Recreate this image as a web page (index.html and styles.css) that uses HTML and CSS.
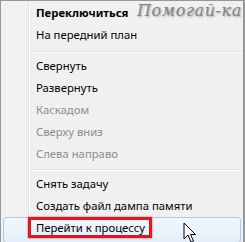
FILE: index.html
```html
<!DOCTYPE html>
<html lang="ru">
<head>
<meta charset="UTF-8" />
<title>Меню</title>
<link rel="stylesheet" href="styles.css">
</head>
<body>

<div class="menu">
  <div class="item bold">Переключиться</div>
  <div class="item">На передний план</div>
  <div class="sep"></div>
  <div class="item">Свернуть</div>
  <div class="item">Развернуть</div>
  <div class="item off">Каскадом</div>
  <div class="item off">Сверху вниз</div>
  <div class="item off">Слева направо</div>
  <div class="sep short"></div>
  <div class="item">Снять задачу</div>
  <div class="item">Создать файл дампа памяти</div>
  <div class="item hover">Перейти к процессу<span class="mark"></span></div>

  <div class="watermark">Помогай-ка</div>
  <svg class="cursor" width="14" height="22" viewBox="0 0 14 22">
    <path d="M1 1 L1 17 L5 13 L8 20 L10.5 19 L7.5 12.5 L12.5 12.5 Z" fill="#fff" stroke="#000" stroke-width="1"/>
  </svg>
</div>

</body>
</html>
```

FILE: styles.css
```css
html, body {
  margin: 0;
  padding: 0;
  background: #f0f0f0;
}
body {
  font-family: "Noto Sans", sans-serif;
  font-size: 11.3px;
  overflow: hidden;
}
.menu {
  position: relative;
  box-sizing: border-box;
  width: 245px;
  height: 260px;
  border: 1px solid #979797;
  border-right: 2px solid #979797;
  border-bottom: none;
  padding: 1px 0 0 2px;
  background: linear-gradient(to right, #f1f1f1 27px, #e2e3e3 27px, #e2e3e3 28px, #fff 28px, #fff 29px, #f0f0f0 29px);
}
.item {
  position: relative;
  height: 22px;
  line-height: 22px;
  padding-left: 33px;
  margin-right: 2px;
  color: #000;
}
.bold {
  font-weight: bold;
}
.off {
  color: #8d8d8d;
}
.sep {
  height: 0;
  margin: 5px 2px 2px 28px;
  border-top: 1px solid #e0e0e0;
  border-bottom: 1px solid #fff;
}
.sep.short {
  margin-top: 4px;
}
.hover {
  box-sizing: border-box;
  height: 26px;
  line-height: 20px;
  padding-left: 32px;
  border: 1px solid #a8cbf1;
  border-radius: 3px;
  background: linear-gradient(to bottom, #f2f7fd, #e3eefb);
}
.mark {
  position: absolute;
  left: 24px;
  top: -1px;
  width: 118px;
  height: 15px;
  border: 3px solid #e8141c;
  box-shadow: 0 0 2px rgba(0,0,0,0.5);
}
.watermark {
  position: absolute;
  left: 136px;
  top: 0;
  font-family: "DejaVu Serif", serif;
  font-style: italic;
  font-size: 16px;
  color: #858585;
  text-shadow: 1px 1px 2px #a8a8a8;
  letter-spacing: 0.6px;
  white-space: nowrap;
}
.cursor {
  position: absolute;
  left: 182px;
  top: 221px;
}
```
